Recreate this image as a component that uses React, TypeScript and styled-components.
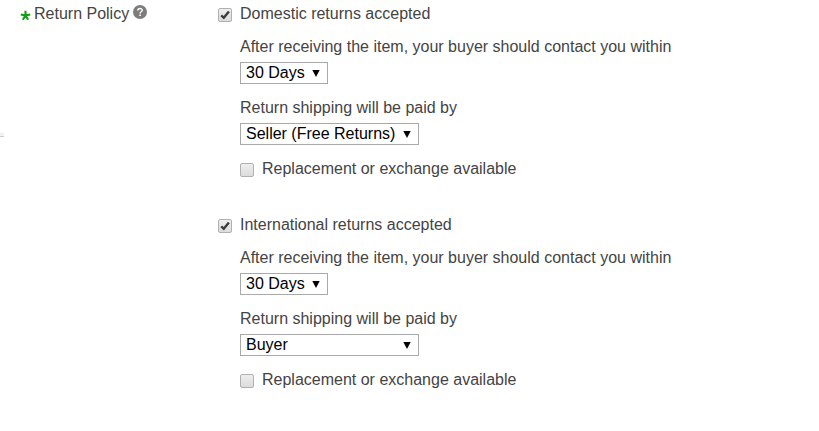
import React, { useId, useState } from "react";
import styled, { createGlobalStyle } from "styled-components";

const GlobalStyle = createGlobalStyle`
  * { box-sizing: border-box; }
  body {
    margin: 0;
    background: #fff;
    color: #444;
    font: 16px/20px "Liberation Sans", Arial, sans-serif;
  }
`;

const Page = styled.main`
  display: grid;
  grid-template-columns: 218px minmax(0, 1fr);
  padding: 4px 0 40px;
`;

const LabelColumn = styled.div`
  display: flex;
  flex-direction: column;
`;

const FieldLabel = styled.div`
  display: flex;
  align-items: center;
  height: 20px;
  padding-left: 20px;
`;

const RequiredMark = styled.svg`
  width: 11px;
  height: 11px;
  margin: 2px 3px 0 0;
`;

const HelpButton = styled.button`
  display: flex;
  margin: 0 0 4px 4px;
  padding: 0;
  border: 0;
  background: none;
  cursor: pointer;
`;

const EdgeRule = styled.hr`
  width: 4px;
  height: 4px;
  margin: 109px 0 0;
  border: 0;
  border-bottom: 1px solid #ccc;
  background: #f1f1f1;
`;

const Groups = styled.div`
  display: flex;
  flex-direction: column;
  gap: 36px;
`;

const Group = styled.section`
  display: flex;
  flex-direction: column;
`;

const Details = styled.div`
  display: flex;
  flex-direction: column;
  align-items: flex-start;
  gap: 14px;
  padding: 13px 0 0 22px;
`;

const Field = styled.div`
  display: flex;
  flex-direction: column;
  align-items: flex-start;
  gap: 5px;
`;

const CheckLabel = styled.label`
  display: flex;
  align-items: center;
  gap: 8px;
`;

const CheckFrame = styled.span`
  display: grid;
  margin-top: 2px;
  > * { grid-area: 1 / 1; }
`;

const CheckInput = styled.input`
  appearance: none;
  width: 14px;
  height: 14px;
  margin: 0;
  border: 1px solid #b0b0b0;
  border-radius: 2px;
  background: linear-gradient(#eee, #dcdcdc);
`;

const CheckIcon = styled.svg`
  width: 14px;
  height: 14px;
  pointer-events: none;
`;

const SelectFrame = styled.span<{ $wide: boolean }>`
  display: grid;
  align-items: center;
  width: ${(p) => (p.$wide ? 179 : 88)}px;
  > * { grid-area: 1 / 1; }
`;

const SelectInput = styled.select`
  appearance: none;
  width: 100%;
  height: 22px;
  margin: 0;
  padding: 0 5px;
  border: 1px solid #a9a9a9;
  border-radius: 0;
  background: #fff;
  color: #000;
  font: 16px/20px "Liberation Sans", Arial, sans-serif;
`;

const SelectArrow = styled.svg`
  justify-self: end;
  width: 8px;
  height: 7px;
  margin-right: 8px;
  pointer-events: none;
`;

function Check({ text, initial = false }: { text: string; initial?: boolean }) {
  const [on, setOn] = useState(initial);
  return (
    <CheckLabel>
      <CheckFrame>
        <CheckInput type="checkbox" checked={on} onChange={(e) => setOn(e.target.checked)} />
        {on && (
          <CheckIcon viewBox="0 0 14 14" aria-hidden="true">
            <path d="M3.2 7.4 5.8 9.8 10.9 3.6" fill="none" stroke="#3c3c3c" strokeWidth="2.4" />
          </CheckIcon>
        )}
      </CheckFrame>
      {text}
    </CheckLabel>
  );
}

interface SelectProps {
  label: string;
  options: string[];
  initial: string;
  wide?: boolean;
}

function Select({ label, options, initial, wide = false }: SelectProps) {
  const id = useId();
  return (
    <Field>
      <label htmlFor={id}>{label}</label>
      <SelectFrame $wide={wide}>
        <SelectInput id={id} defaultValue={initial}>
          {options.map((o) => (
            <option key={o}>{o}</option>
          ))}
        </SelectInput>
        <SelectArrow viewBox="0 0 8 7" aria-hidden="true">
          <path d="M.3 0h7.4L4 7z" fill="#000" />
        </SelectArrow>
      </SelectFrame>
    </Field>
  );
}

function ReturnGroup({ title, payer }: { title: string; payer: string }) {
  return (
    <Group>
      <Check text={title} initial />
      <Details>
        <Select
          label="After receiving the item, your buyer should contact you within"
          options={["30 Days", "60 Days"]}
          initial="30 Days"
        />
        <Select
          label="Return shipping will be paid by"
          options={["Buyer", "Seller (Free Returns)"]}
          initial={payer}
          wide
        />
        <Check text="Replacement or exchange available" />
      </Details>
    </Group>
  );
}

export default function App() {
  return (
    <>
      <GlobalStyle />
      <Page>
        <LabelColumn>
          <FieldLabel>
            <RequiredMark viewBox="0 0 11 11" role="img" aria-label="Required">
              <path
                d="M5.5 5.5V.8M5.5 5.5 .8 4.4M5.5 5.5 10.2 4.4M5.5 5.5 2.8 9.8M5.5 5.5 8.2 9.8"
                fill="none"
                stroke="#12a012"
                strokeWidth="2.1"
              />
            </RequiredMark>
            Return Policy
            <HelpButton type="button" aria-label="Help with return policy">
              <svg width="14" height="14" viewBox="0 0 14 14" aria-hidden="true">
                <circle cx="7" cy="7" r="7" fill="#7d7d7d" />
                <path
                  d="M4.9 5.5C4.9 3 9.2 3 9.2 5.3 9.2 6.8 7.1 6.7 7.1 8.5"
                  fill="none"
                  stroke="#fff"
                  strokeWidth="1.5"
                />
                <path d="M6.3 9.5h1.6v1.5H6.3z" fill="#fff" />
              </svg>
            </HelpButton>
          </FieldLabel>
          <EdgeRule />
        </LabelColumn>
        <Groups>
          <ReturnGroup title="Domestic returns accepted" payer="Seller (Free Returns)" />
          <ReturnGroup title="International returns accepted" payer="Buyer" />
        </Groups>
      </Page>
    </>
  );
}
